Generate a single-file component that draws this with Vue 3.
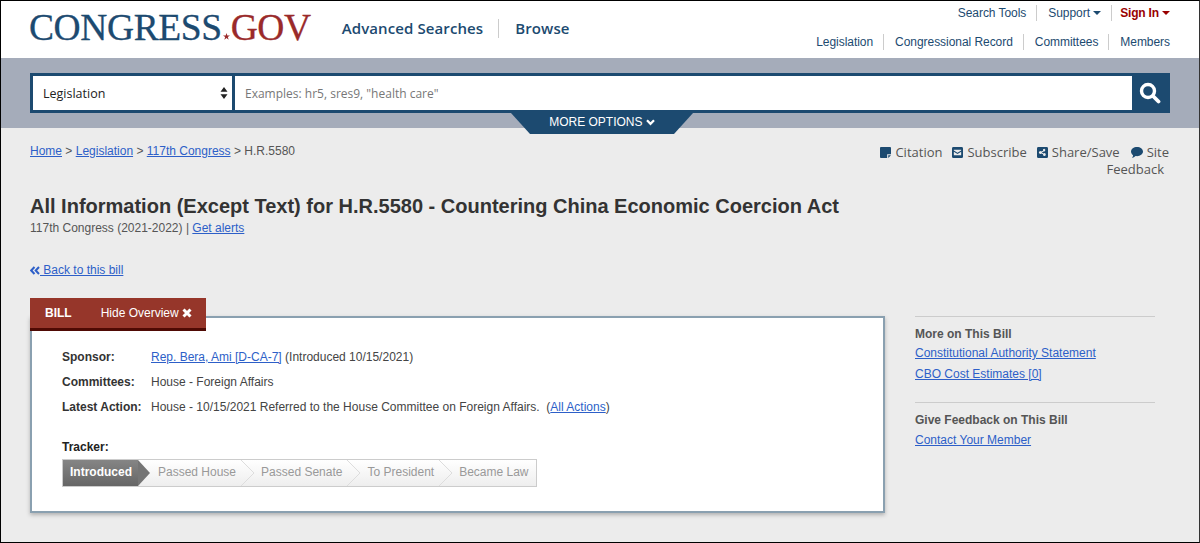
<template>
  <div class="page">
    <header class="masthead">
      <a class="logo"><span>CONGRESS</span><svg class="star" viewBox="0 0 10 10" width="7" height="7"><path d="M5 0l1.200 3.600H10L6.900 5.800 8.100 9.500 5 7.200 1.900 9.500 3.100 5.800 0 3.600h3.800z" /></svg><span class="gov">GOV</span></a>
      <nav class="main-nav">
        <a>Advanced Searches</a>
        <a>Browse</a>
      </nav>
      <div class="util">
        <ul class="util-row">
          <li>Search Tools</li>
          <li>Support <i class="caret"></i></li>
          <li class="sign-in">Sign In <i class="caret"></i></li>
        </ul>
        <ul class="util-row lower">
          <li v-for="item in sections" :key="item">{{ item }}</li>
        </ul>
      </div>
    </header>

    <section class="search-band">
      <div class="search-bar">
        <div class="select">
          <span>Legislation</span>
          <svg viewBox="0 0 8 12" width="8" height="12"><path d="M4 0l3.500 4.800h-7zM4 12L.5 7.200h7z" /></svg>
        </div>
        <div class="input">Examples: hr5, sres9, "health care"</div>
        <div class="go">
          <svg viewBox="0 0 22 22" width="22" height="22"><circle cx="9" cy="9" r="6.500" /><path d="M14 14l5.500 5.500" class="handle" /></svg>
        </div>
      </div>
      <div class="more-options">
        MORE OPTIONS
        <svg viewBox="0 0 10 8" width="9" height="7"><path d="M1 1.500l4 4 4-4" /></svg>
      </div>
    </section>

    <main class="content">
      <div class="top-row">
        <div class="crumbs"><a>Home</a> &gt; <a>Legislation</a> &gt; <a>117th Congress</a> &gt; H.R.5580</div>
        <div class="tools">
          <span class="tool"><svg viewBox="0 0 12 12" width="11" height="11"><path d="M0 1a1 1 0 0 1 1-1h10a1 1 0 0 1 1 1v6.800H7.800V12H1a1 1 0 0 1-1-1z" /><path d="M9 9h3l-3 3z" /></svg>Citation</span>
          <span class="tool"><svg viewBox="0 0 12 12" width="11" height="11"><path fill-rule="evenodd" d="M1.500 0h9A1.500 1.500 0 0 1 12 1.500v9a1.500 1.500 0 0 1-1.500 1.500h-9A1.500 1.500 0 0 1 0 10.500v-9A1.500 1.500 0 0 1 1.500 0zM2 3v.8l4 2.400 4-2.400V3zm0 2.200V9h8V5.200L6 7.600z" /></svg>Subscribe</span>
          <span class="tool"><svg viewBox="0 0 12 12" width="11" height="11"><path fill-rule="evenodd" d="M1.500 0h9A1.500 1.500 0 0 1 12 1.500v9a1.500 1.500 0 0 1-1.500 1.500h-9A1.500 1.500 0 0 1 0 10.500v-9A1.500 1.500 0 0 1 1.500 0zM8 2a1.500 1.500 0 0 0-1.400 2L4.700 5a1.500 1.500 0 1 0 0 2l1.900 1a1.500 1.500 0 1 0 .5-.9L5.200 6.100v-.2l1.900-1A1.500 1.500 0 1 0 8 2z" /></svg>Share/Save</span>
          <span class="tool last"><svg viewBox="0 0 12 11" width="12" height="11"><path d="M6 0c3.300 0 6 2 6 4.600S9.300 9.200 6 9.200c-.5 0-1 0-1.400-.1C3.600 10 2.300 10.700 1 11c.6-.7 1-1.500 1.100-2.700C.8 7.500 0 6.100 0 4.600 0 2 2.700 0 6 0z" /></svg>Site<br /><span class="wrap">Feedback</span></span>
        </div>
      </div>

      <h1>All Information (Except Text) for H.R.5580 - Countering China Economic Coercion Act</h1>
      <p class="sub">117th Congress (2021-2022) | <a>Get alerts</a></p>
      <p class="back"><svg viewBox="0 0 10 9" width="10" height="9"><path d="M4.500 1L1.200 4.500 4.500 8M9 1L5.700 4.500 9 8" /></svg><a>&nbsp;Back to this bill</a></p>

      <div class="columns">
        <div class="overview">
          <div class="tab"><b>BILL</b><span>Hide Overview <svg viewBox="0 0 10 10" width="10" height="10"><path d="M1.500 1.500l7 7m0-7l-7 7" /></svg></span></div>
          <div class="card">
            <dl>
              <template v-for="row in facts" :key="row.label">
                <dt>{{ row.label }}</dt>
                <dd>
                  <a v-if="row.link">{{ row.link }}</a>
                  {{ row.text }}<template v-if="row.after">&nbsp; (<a>{{ row.after }}</a>)</template>
                </dd>
              </template>
            </dl>
            <div class="tracker-label">Tracker:</div>
            <ol class="tracker">
              <li v-for="(step, i) in steps" :key="step" :class="{ current: i === 0 }">
                <svg v-if="i > 1" class="sep" viewBox="0 0 14 26" preserveAspectRatio="none"><path d="M0 0l13 13L0 26" /></svg>
                {{ step }}
              </li>
            </ol>
          </div>
        </div>
        <aside class="side">
          <h3>More on This Bill</h3>
          <p><a>Constitutional Authority Statement</a></p>
          <p><a>CBO Cost Estimates [0]</a></p>
          <h3 class="second">Give Feedback on This Bill</h3>
          <p><a>Contact Your Member</a></p>
        </aside>
      </div>
    </main>
  </div>
</template>

<script setup>
const sections = ['Legislation', 'Congressional Record', 'Committees', 'Members'];

const facts = [
  { label: 'Sponsor:', link: 'Rep. Bera, Ami [D-CA-7]', text: '(Introduced 10/15/2021)' },
  { label: 'Committees:', text: 'House - Foreign Affairs' },
  { label: 'Latest Action:', text: 'House - 10/15/2021 Referred to the House Committee on Foreign Affairs.', after: 'All Actions' },
];

const steps = ['Introduced', 'Passed House', 'Passed Senate', 'To President', 'Became Law'];
</script>

<style>
html, body { margin: 0; background: #ececec; }
</style>

<style scoped>
.page {
  box-sizing: border-box;
  width: 1200px;
  height: 543px;
  overflow: hidden;
  border: 1px solid #000;
  border-right-color: #333;
  background: #ececec;
  font: 12px/16px "Liberation Sans", Arial, sans-serif;
  color: #444;
}
a { color: #2d5fc8; text-decoration: underline; }
ul, ol { list-style: none; margin: 0; padding: 0; }

.masthead {
  display: flex;
  height: 57px;
  padding-left: 28px;
  background: #fff;
}
.logo {
  display: flex;
  align-items: baseline;
  height: 40px;
  padding-top: 7px;
  font: 37.500px/40px "Liberation Serif", serif;
  letter-spacing: -0.400px;
  -webkit-text-stroke: 0.300px currentColor;
  color: #1c4a70;
  text-decoration: none;
}
.star { margin: 0 1px; fill: #9a2a2a; }
.gov { color: #9a2a2a; }
.main-nav {
  display: flex;
  align-items: flex-start;
  margin-left: 31px;
  padding-top: 18px;
  font: 600 15px/19px "Open Sans", sans-serif;
  letter-spacing: 0.100px;
}
.main-nav a { color: #1c4a70; text-decoration: none; }
.main-nav a + a { margin-left: 15px; padding-left: 16px; border-left: 1px solid #ccc; }
.util { margin-left: auto; padding: 4px 29px 0 0; }
.util-row { display: flex; justify-content: flex-end; color: #1c4a70; letter-spacing: -0.050px; }
.util-row.lower { margin-top: 13px; }
.util-row li + li { margin-left: 10px; padding-left: 11px; border-left: 1px solid #ccc; }
.util-row .sign-in { color: #900; font-weight: 700; padding-left: 8px; letter-spacing: -0.200px; }
.caret {
  display: inline-block;
  vertical-align: 2px;
  border: 4px solid transparent;
  border-top-color: currentColor;
  border-bottom: 0;
}

.search-band {
  position: relative;
  height: 70px;
  padding: 15px 29px 0;
  background: #a5acba;
  box-sizing: border-box;
}
.search-bar {
  display: flex;
  height: 40px;
  box-sizing: border-box;
  border: 3px solid #1c4a70;
  background: #1c4a70;
  font: 12.500px/36px "Open Sans", sans-serif;
}
.select {
  display: flex;
  align-items: center;
  justify-content: space-between;
  box-sizing: border-box;
  width: 199px;
  padding: 0 4px 0 10px;
  background: #fff;
  color: #222;
}
.select span { padding-top: 2px; }
.select svg { fill: #222; }
.input {
  flex: 1;
  margin-left: 3px;
  padding-left: 10px;
  background: #fff;
  color: #777;
  font-size: 12px;
}
.go { display: flex; align-items: center; justify-content: center; width: 35px; }
.go svg { fill: none; stroke: #fff; stroke-width: 3.400; }
.go .handle { stroke-width: 3.800; stroke-linecap: round; }
.more-options {
  position: absolute;
  top: 55px;
  left: 510px;
  width: 182px;
  height: 21px;
  clip-path: polygon(0 0, 100% 0, 163px 100%, 19px 100%);
  background: #1c4a70;
  color: #fff;
  text-align: center;
  line-height: 18px;
}
.more-options svg { fill: none; stroke: #fff; stroke-width: 2.600; }

.content { padding: 15px 30px 0 29px; }
.top-row { display: flex; justify-content: space-between; }
.crumbs { color: #555; }
.tools {
  width: 340px;
  padding-top: 1px;
  font: 13px/17px "Open Sans", sans-serif;
  color: #555;
  text-align: right;
}
.tool { margin-left: 10px; }
.tool.last { margin-left: 11px; }
.tool svg { margin-right: 4px; vertical-align: -1px; fill: #1c4a70; }
.wrap { margin-right: 5px; }
h1 {
  margin: 16px 0 0;
  font-size: 20px;
  line-height: 24px;
  font-weight: 700;
  color: #333;
}
.sub { margin: 2px 0 0; line-height: 16px; color: #555; }
.back { margin: 26px 0 0; }
.back svg { fill: none; stroke: #2d5fc8; stroke-width: 2; vertical-align: -1px; }
.columns { display: flex; margin-top: 20px; }
.overview { position: relative; width: 855px; padding-top: 18px; }
.tab {
  position: absolute;
  top: 0;
  left: 0;
  z-index: 1;
  display: flex;
  box-sizing: border-box;
  height: 33px;
  width: 176px;
  padding: 7px 0 0 15px;
  background: #96362a;
  border-bottom: 3px solid #4f0a04;
  color: #fff;
}
.tab span { margin-left: 29px; }
.tab svg { fill: none; stroke: #fff; stroke-width: 3; vertical-align: -1px; }
.card {
  box-sizing: border-box;
  height: 197px;
  padding: 31px 30px 0;
  background: #fff;
  border: 2px solid #8aa0b0;
  box-shadow: 0 2px 4px rgba(0, 0, 0, 0.25);
}
dl { display: grid; grid-template-columns: 89px 1fr; row-gap: 9px; margin: 0; }
dt { font-weight: 700; color: #333; }
dd { margin: 0; color: #444; }
.tracker-label { margin-top: 24px; font-weight: 700; color: #222; }
.tracker {
  display: inline-flex;
  height: 28px;
  margin-top: 4px;
  box-sizing: border-box;
  border: 1px solid #ccc;
  background: linear-gradient(#fff, #eee);
  color: #999;
  line-height: 25px;
}
.tracker li { position: relative; padding: 0 5px 0 20px; }
.tracker li:last-child { padding-right: 7px; }
.sep {
  position: absolute;
  top: 0;
  left: 0;
  width: 14px;
  height: 26px;
  fill: none;
  stroke: #ddd;
}
.tracker .current {
  padding: 0 0 0 7px;
  width: 68px;
  background: linear-gradient(#858585, #666);
  color: #fff;
  font-weight: 700;
}
.tracker .current::after {
  content: "";
  position: absolute;
  top: 0;
  left: 75px;
  border: 13px solid transparent;
  border-left: 12px solid #757575;
  border-right: 0;
}
.side { width: 240px; margin: 18px 0 0 30px; border-top: 1px solid #ccc; padding-top: 9px; }
.side h3 { margin: 0 0 3px; font-size: 12px; line-height: 16px; color: #555; }
.side p { margin: 0 0 5px; }
.side .second { margin-top: 20px; margin-bottom: 4px; padding-top: 9px; border-top: 1px solid #ccc; }
</style>
